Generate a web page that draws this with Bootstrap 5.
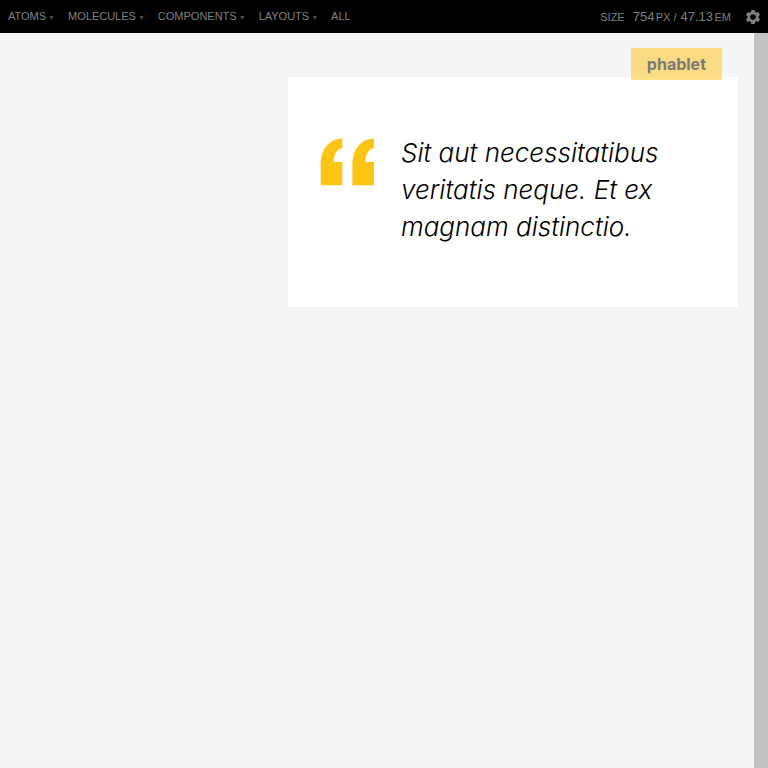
<!DOCTYPE html>
<html lang="en">
<head>
<meta charset="utf-8">
<meta name="viewport" content="width=device-width, initial-scale=1">
<title>Pattern Lab</title>
<link rel="stylesheet" href="https://cdn.jsdelivr.net/npm/bootstrap@5.3.0/dist/css/bootstrap.min.css">
<style>
body { background: #f5f5f5; font-family: "Liberation Sans", Arial, sans-serif; }
.pl-bar { background: #000; color: #808080; height: 33px; font-size: 11px; line-height: 16px; }
.pl-bar button { color: #808080; font-size: 11px; line-height: 16px; padding: 0 5px 0 8px; }
.pl-bar .pl-item { color: #808080; padding: 0 8px; }
.pl-bar .pl-caret { color: #4d4d4d; font-size: 7px; margin-left: 2px; }
.pl-bar input { width: 23px; height: 16px; font-size: 13px; color: #808080; }
.pl-bar input.pl-em { width: 34px; }
.pl-bar .pl-tools { padding-right: 8px; }
.pl-bar .pl-gear { margin-left: 15px; }
.pl-handle { width: 14px; background: #c2c2c2; }
.quote-panel { width: 450px; margin-top: 44px; margin-right: 16px; padding: 57px 32px 62px; }
.quote-mark { width: 54px; height: 48px; margin-top: 4px; margin-right: 27px; }
.quote-text { font: italic 300 26px/37px Inter, "Liberation Sans", sans-serif; color: #000; }
.size-flag { top: -29px; right: 16px; padding: 0 16px; background: #fdc513; color: #000; opacity: .5; font: 700 16px/32px Inter, sans-serif; }
</style>
<script src="https://cdn.jsdelivr.net/npm/bootstrap@5.3.0/dist/js/bootstrap.bundle.min.js"></script>
</head>
<body class="d-flex flex-column min-vh-100">
<header class="pl-bar d-flex align-items-center justify-content-between">
  <nav class="d-flex" aria-label="Patterns">
    <button type="button" class="btn border-0 rounded-0">ATOMS<span class="pl-caret">▼</span></button>
    <button type="button" class="btn border-0 rounded-0">MOLECULES<span class="pl-caret">▼</span></button>
    <button type="button" class="btn border-0 rounded-0">COMPONENTS<span class="pl-caret">▼</span></button>
    <button type="button" class="btn border-0 rounded-0">LAYOUTS<span class="pl-caret">▼</span></button>
    <a href="#" class="pl-item text-decoration-none">ALL</a>
  </nav>
  <form class="pl-tools d-flex align-items-center">
    <label for="size-px" class="me-2">SIZE</label>
    <input id="size-px" class="border-0 bg-transparent p-0" value="754"><span class="me-1">PX /</span>
    <input id="size-em" class="pl-em border-0 bg-transparent p-0" value="47.13" aria-label="Size in em"><span>EM</span>
    <button type="button" class="pl-gear btn border-0 d-flex p-0" aria-label="Settings">
      <svg width="14" height="14" viewBox="0 0 14 14" aria-hidden="true"><path fill="#808080" fill-rule="evenodd" d="M5.300 0h3.400l.4 2 1.200.7 2-.7L14 4.800 12.500 6.200v1.600L14 9.200 12.300 12l-2-.7-1.200.7-.4 2H5.300l-.4-2-1.200-.7-2 .7L0 9.200 1.500 7.800V6.200L0 4.800 1.700 2l2 .7L4.900 2zM7 4.200a2.800 2.800 0 1 0 0 5.600 2.800 2.800 0 0 0 0-5.600z"/></svg>
    </button>
  </form>
</header>
<main class="d-flex flex-grow-1">
  <section class="flex-grow-1 d-flex justify-content-end align-items-start">
    <div class="quote-panel bg-white position-relative d-flex align-items-start">
      <span class="size-flag position-absolute">phablet</span>
      <svg class="quote-mark flex-shrink-0" viewBox="0 0 54 48" aria-hidden="true"><path fill="#fdc513" d="M22.300.5v9.200C17 11 14 16 13.700 24h8.600v23.300H.7V27C.7 11 9 1 22.300.5zM54 .5v9.200C48.700 11 45.700 16 45.400 24H54v23.300H32.400V27C32.400 11 40.700 1 54 .5z"/></svg>
      <blockquote class="quote-text mb-0">Sit aut necessitatibus veritatis neque. Et ex magnam distinctio.</blockquote>
    </div>
  </section>
  <div class="pl-handle"></div>
</main>
</body>
</html>
